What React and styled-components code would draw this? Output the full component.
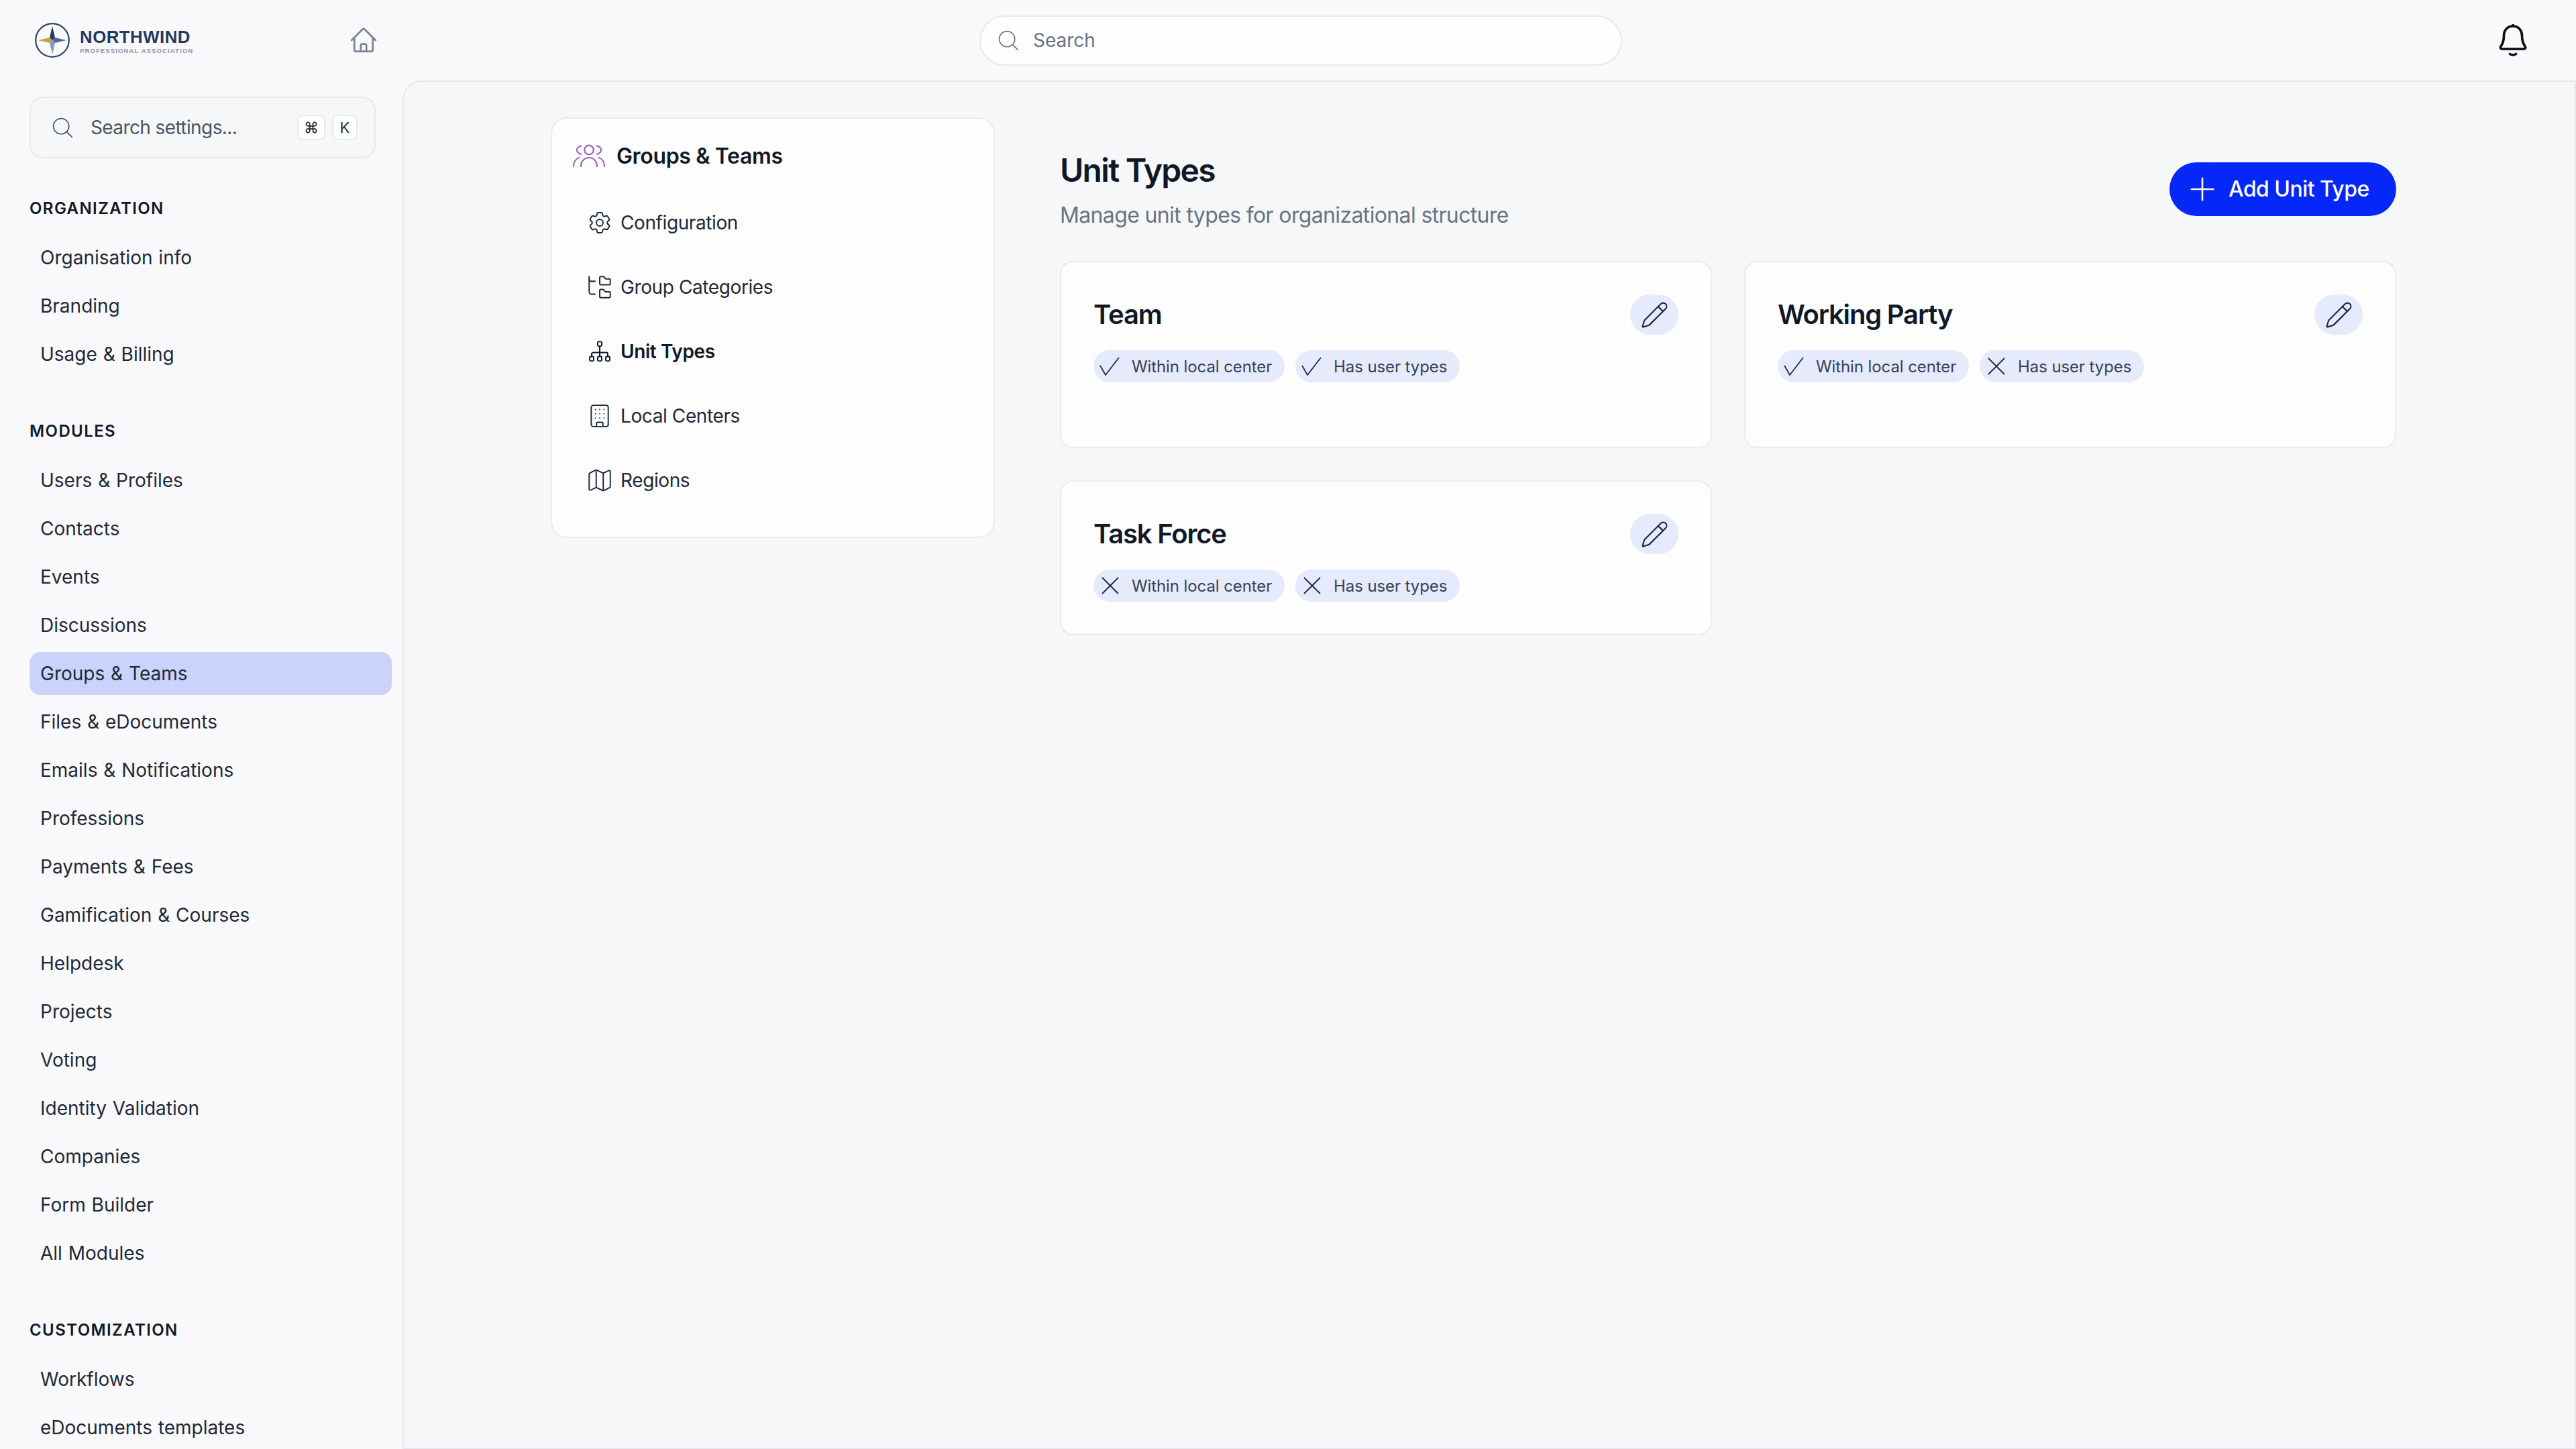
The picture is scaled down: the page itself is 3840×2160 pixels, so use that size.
import React from "react";
import styled, { createGlobalStyle } from "styled-components";
import { Pencil, Plus, Building, Map as MapIcon, FolderTree } from "lucide-react";
import { HiOutlineHome, HiOutlineMagnifyingGlass, HiOutlineCog6Tooth } from "react-icons/hi2";

const GlobalStyle = createGlobalStyle`
  html, body { margin: 0; padding: 0; }
  body {
    background: #f9f9fb;
    font-family: Inter, "Noto Sans", "Liberation Sans", sans-serif;
    color: #1e2939;
  }
  * { box-sizing: border-box; }
`;

const Page = styled.div`
  width: 3840px;
  height: 2160px;
  overflow: hidden;
  display: flex;
  flex-direction: column;
  background: #f9f9fb;
`;

const Header = styled.header`
  height: 120px;
  flex: none;
  display: flex;
  align-items: center;
  padding-right: 73px;
`;

const Brand = styled.div`
  width: 600px;
  flex: none;
  display: flex;
  align-items: center;
  padding-left: 52px;
  padding-right: 36px;
`;

const BrandText = styled.div`
  display: flex;
  flex-direction: column;
  margin-left: 15px;
  margin-right: auto;
  padding-top: 2px;
`;

const BrandName = styled.span`
  font-family: "Liberation Sans", Arial, sans-serif;
  font-weight: 700;
  font-size: 25.8px;
  line-height: 28px;
  letter-spacing: 0.5px;
  color: #1f3a63;
`;

const BrandTag = styled.span`
  font-family: "Liberation Sans", Arial, sans-serif;
  font-weight: 700;
  font-size: 9.5px;
  line-height: 12px;
  margin-top: 1px;
  letter-spacing: 1.12px;
  color: #8794aa;
  white-space: nowrap;
`;

const HomeLink = styled.span`
  display: flex;
  color: #7b8494;
  font-size: 44px;
  stroke-width: 1.2;
`;

const TopSearch = styled.div`
  width: 958px;
  height: 75px;
  margin-left: 860px;
  display: flex;
  align-items: center;
  gap: 18px;
  padding-left: 23px;
  background: #fefefe;
  border: 2px solid #e7e8eb;
  border-radius: 38px;
  font-size: 28px;
  color: #6a7282;
`;

const Bell = styled.svg`
  width: 42px;
  height: 48px;
  margin-left: auto;
  fill: none;
  stroke: #0c0c10;
  stroke-width: 3.6;
  stroke-linecap: round;
  stroke-linejoin: round;
`;

const Body = styled.div`
  flex: 1;
  min-height: 0;
  display: flex;
`;

const Sidebar = styled.aside`
  width: 600px;
  flex: none;
  padding: 24px 16px 0 44px;
  overflow: hidden;
`;

const SettingsSearch = styled.div`
  width: 516px;
  height: 92px;
  display: flex;
  align-items: center;
  padding: 0 25px 0 29px;
  margin-bottom: 59px;
  background: #f6f7f9;
  border: 2px solid #e8e9ec;
  border-radius: 20px;
  font-size: 28px;
  color: #4a5565;
`;

const SettingsLabel = styled.span`
  margin-left: 23px;
  margin-right: auto;
  letter-spacing: -0.6px;
`;

const SearchGlyph = styled(HiOutlineMagnifyingGlass)`
  flex: none;
  font-size: 37px;
  stroke-width: 1.1;
`;

const Key = styled.kbd`
  width: ${(p) => p.$width}px;
  height: 38px;
  margin-left: 10px;
  display: flex;
  align-items: center;
  justify-content: center;
  background: #fff;
  border: 2px solid #e8eaee;
  border-radius: 8px;
  font-family: Inter, "Noto Sans CJK JP", "DejaVu Sans", sans-serif;
  font-size: 22px;
  color: #1e2939;
`;

const Section = styled.section`
  margin-bottom: 67px;
`;

const SectionTitle = styled.h3`
  margin: 0 0 25px;
  height: 32px;
  line-height: 32px;
  font-size: 24px;
  font-weight: 600;
  letter-spacing: 1.4px;
  color: #101828;
`;

const NavList = styled.div`
  display: flex;
  flex-direction: column;
  gap: 8px;
`;

const NavItem = styled.div`
  height: 64px;
  display: flex;
  align-items: center;
  padding-left: 16px;
  border-radius: 16px;
  font-size: 28px;
  word-spacing: 1px;
  color: #1e2939;
  background: ${(p) => (p.$active ? "#c9d3fc" : "transparent")};
`;

const Main = styled.main`
  flex: 1;
  display: flex;
  align-items: flex-start;
  gap: 97px;
  padding: 53px 266px 0 219px;
  background: #f6f7f9;
  border: 2px solid #e7e8eb;
  border-top-left-radius: 28px;
`;

const SubNav = styled.nav`
  width: 662px;
  flex: none;
  padding: 32px 31px 36px;
  background: #fdfdfd;
  border: 2px solid #e9ebee;
  border-radius: 24px;
`;

const SubNavHead = styled.div`
  height: 46px;
  display: flex;
  align-items: center;
  gap: 17px;
  margin-bottom: 29px;
  font-size: 32px;
  font-weight: 600;
  letter-spacing: -0.35px;
  color: #101828;
`;

const GroupGlyph = styled.svg`
  width: 48px;
  height: 34px;
  flex: none;
  fill: none;
  stroke: #9a62bb;
  stroke-width: 2.2;
  stroke-linecap: round;
`;

const SubNavItem = styled.div`
  height: 96px;
  display: flex;
  align-items: center;
  gap: 15px;
  padding-left: 24px;
  font-size: 28px;
  letter-spacing: -0.4px;
  font-weight: ${(p) => (p.$active ? 600 : 400)};
  color: ${(p) => (p.$active ? "#101828" : "#1e2939")};
`;

const IconSlot = styled.span`
  width: 32px;
  height: 32px;
  flex: none;
  display: flex;
  align-items: center;
  justify-content: center;
  font-size: 40px;
`;

const Hierarchy = styled.svg`
  width: 36px;
  height: 36px;
  flex: none;
  fill: none;
  stroke: currentColor;
  stroke-width: 1.3;
  stroke-linejoin: round;
`;

const Content = styled.div`
  flex: 1;
  min-width: 0;
  margin-top: 43px;
`;

const ContentHead = styled.div`
  display: flex;
  align-items: center;
  justify-content: space-between;
  margin-bottom: 44px;
`;

const PageTitle = styled.h1`
  margin: 0;
  font-size: 48px;
  line-height: 72px;
  font-weight: 600;
  letter-spacing: -1.7px;
  color: #101828;
`;

const PageSub = styled.p`
  margin: 7px 0 0;
  font-size: 32px;
  line-height: 48px;
  letter-spacing: -0.64px;
  color: #6a7282;
`;

const AddButton = styled.button`
  width: 338px;
  height: 80px;
  display: flex;
  align-items: center;
  gap: 17px;
  padding: 0 0 0 27px;
  background: #0527f7;
  border: none;
  border-radius: 40px;
  font-family: inherit;
  font-size: 32px;
  font-weight: 500;
  letter-spacing: -0.55px;
  color: #fff;
`;

const CardGrid = styled.div`
  display: grid;
  grid-template-columns: 1fr 1fr;
  gap: 48px;
`;

const Card = styled.article`
  padding: 48px 48px ${(p) => (p.$tall ? 96 : 48)}px;
  background: #fdfdfd;
  border: 2px solid #e9ebee;
  border-radius: 20px;
`;

const CardHead = styled.div`
  height: 60px;
  display: flex;
  align-items: center;
  justify-content: space-between;
  margin-bottom: 23px;
`;

const CardTitle = styled.h2`
  margin: 0 0 2px;
  font-size: 40px;
  font-weight: 600;
  letter-spacing: -1.2px;
  color: #101828;
`;

const EditButton = styled.span`
  width: 72px;
  height: 60px;
  display: flex;
  align-items: center;
  justify-content: center;
  border-radius: 30px;
  background: #e5eafd;
  color: #1e2939;
`;

const ChipRow = styled.div`
  display: flex;
  gap: 16px;
`;

const Chip = styled.span`
  height: 48px;
  display: flex;
  align-items: center;
  gap: 16px;
  padding: 0 19px 0 9px;
  border-radius: 24px;
  background: #e5eafd;
  font-size: 24px;
  letter-spacing: -0.1px;
  color: #364153;
`;

const FlagGlyph = styled.svg`
  width: 32px;
  height: 32px;
  flex: none;
  fill: none;
  stroke: #1e2939;
  stroke-width: 1.8;
`;

const organization = ["Organisation info", "Branding", "Usage & Billing"];
const modules = [
  "Users & Profiles", "Contacts", "Events", "Discussions", "Groups & Teams",
  "Files & eDocuments", "Emails & Notifications", "Professions", "Payments & Fees",
  "Gamification & Courses", "Helpdesk", "Projects", "Voting", "Identity Validation",
  "Companies", "Form Builder", "All Modules",
];
const customization = ["Workflows", "eDocuments templates"];

const unitTypes = [
  { name: "Team", local: true, users: true, tall: true },
  { name: "Working Party", local: true, users: false, tall: true },
  { name: "Task Force", local: false, users: false },
];

const Logo = () => (
  <svg width="52" height="52" viewBox="0 0 52 52" style={{ flex: "none" }}>
    <circle cx="26" cy="26" r="24.8" fill="none" stroke="#2c4468" strokeWidth="2.2" />
    <path d="M26 5 L30 22 L26 26 L22 22 Z" fill="#1f3a63" />
    <path d="M5 26 L22 22 L26 26 L22 30 Z" fill="#c9a23f" />
    <path d="M47 26 L30 22 L26 26 L30 30 Z" fill="#56698f" />
    <path d="M26 47 L22 30 L26 26 L30 30 Z" fill="#8b9bb6" />
  </svg>
);

const HierarchyIcon = () => (
  <Hierarchy viewBox="0 0 24 24">
    <rect x="10" y="2.2" width="4" height="4.4" rx="1" />
    <path d="M12 6.6V17M4 17v-2.5a1.5 1.5 0 0 1 1.5-1.5h13a1.5 1.5 0 0 1 1.5 1.5V17" />
    <rect x="2" y="17" width="4" height="4.4" rx="1" />
    <rect x="10" y="17" width="4" height="4.4" rx="1" />
    <rect x="18" y="17" width="4" height="4.4" rx="1" />
  </Hierarchy>
);

const Flag = ({ on, label }) => (
  <Chip>
    <FlagGlyph viewBox="0 0 32 32">
      <path d={on ? "M1 15L9 29L29 3" : "M4 4L28 28M28 4L4 28"} />
    </FlagGlyph>
    {label}
  </Chip>
);

export default function App() {
  return (
    <Page>
      <GlobalStyle />
      <Header>
        <Brand>
          <Logo />
          <BrandText>
            <BrandName>NORTHWIND</BrandName>
            <BrandTag>PROFESSIONAL ASSOCIATION</BrandTag>
          </BrandText>
          <HomeLink><HiOutlineHome /></HomeLink>
        </Brand>
        <TopSearch>
          <SearchGlyph />
          Search
        </TopSearch>
        <Bell viewBox="0 0 42 48">
          <path d="M21 1.5V3M21 3C12 3 7.5 10 7.5 17C7.5 27 5 30 3 33C1.5 35 2.5 37 5 37H37C39.5 37 40.5 35 39 33C37 30 34.5 27 34.5 17C34.5 10 30 3 21 3Z" />
          <path d="M16.5 44.5Q21 47.5 25.5 44.5" />
        </Bell>
      </Header>
      <Body>
        <Sidebar>
          <SettingsSearch>
            <SearchGlyph />
            <SettingsLabel>Search settings...</SettingsLabel>
            <Key $width={42}>⌘</Key>
            <Key $width={38}>K</Key>
          </SettingsSearch>
          <Section>
            <SectionTitle>ORGANIZATION</SectionTitle>
            <NavList>
              {organization.map((item) => <NavItem key={item}>{item}</NavItem>)}
            </NavList>
          </Section>
          <Section>
            <SectionTitle>MODULES</SectionTitle>
            <NavList>
              {modules.map((item) => (
                <NavItem key={item} $active={item === "Groups & Teams"}>{item}</NavItem>
              ))}
            </NavList>
          </Section>
          <Section>
            <SectionTitle>CUSTOMIZATION</SectionTitle>
            <NavList>
              {customization.map((item) => <NavItem key={item}>{item}</NavItem>)}
            </NavList>
          </Section>
        </Sidebar>
        <Main>
          <SubNav>
            <SubNavHead>
              <GroupGlyph viewBox="0 0 48 34">
                <circle cx="24" cy="8.5" r="6.8" />
                <path d="M12 2.6C8.6 3.2 5.8 5.6 5.8 8.6S8.6 14 12 14.6" />
                <path d="M36 2.6C39.4 3.2 42.2 5.6 42.2 8.6S39.4 14 36 14.6" />
                <path d="M12 33C12 25.5 17 20 24 20S36 25.5 36 33" />
                <path d="M1 33C1 26.5 4.5 21.5 9.5 20" />
                <path d="M47 33C47 26.5 43.5 21.5 38.5 20" />
              </GroupGlyph>
              Groups &amp; Teams
            </SubNavHead>
            <SubNavItem><IconSlot><HiOutlineCog6Tooth style={{ flex: "none", strokeWidth: 1.2 }} /></IconSlot>Configuration</SubNavItem>
            <SubNavItem><IconSlot><FolderTree size={42} strokeWidth={1.1} style={{ flex: "none" }} /></IconSlot>Group Categories</SubNavItem>
            <SubNavItem $active><IconSlot><HierarchyIcon /></IconSlot>Unit Types</SubNavItem>
            <SubNavItem><IconSlot><Building size={38} strokeWidth={1.2} style={{ flex: "none" }} /></IconSlot>Local Centers</SubNavItem>
            <SubNavItem><IconSlot><MapIcon size={42} strokeWidth={1.1} style={{ flex: "none" }} /></IconSlot>Regions</SubNavItem>
          </SubNav>
          <Content>
            <ContentHead>
              <div>
                <PageTitle>Unit Types</PageTitle>
                <PageSub>Manage unit types for organizational structure</PageSub>
              </div>
              <AddButton><Plus size={56} strokeWidth={1.1} style={{ flex: "none", margin: "0 -6px" }} />Add Unit Type</AddButton>
            </ContentHead>
            <CardGrid>
              {unitTypes.map((unit) => (
                <Card key={unit.name} $tall={unit.tall}>
                  <CardHead>
                    <CardTitle>{unit.name}</CardTitle>
                    <EditButton><Pencil size={43} strokeWidth={1.2} /></EditButton>
                  </CardHead>
                  <ChipRow>
                    <Flag on={unit.local} label="Within local center" />
                    <Flag on={unit.users} label="Has user types" />
                  </ChipRow>
                </Card>
              ))}
            </CardGrid>
          </Content>
        </Main>
      </Body>
    </Page>
  );
}
